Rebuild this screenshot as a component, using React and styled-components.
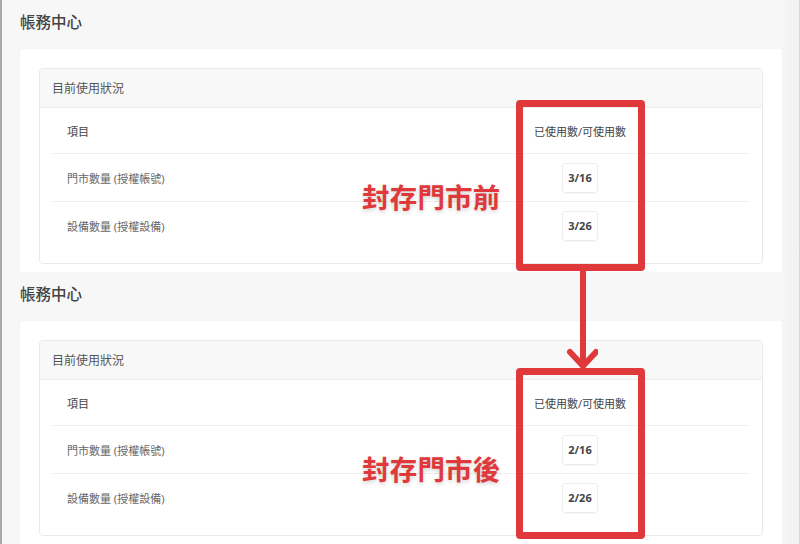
import styled, { createGlobalStyle } from "styled-components";

const GlobalStyle = createGlobalStyle`
  html, body {
    margin: 0;
    padding: 0;
    background: #f7f7f7;
    font-family: "Noto Sans", "Noto Sans CJK TC", sans-serif;
  }
`;

const Page = styled.div`
  position: relative;
  width: 800px;
  height: 544px;
  overflow: hidden;
  box-sizing: border-box;
  border-left: 2px solid #a9a9a9;
  background: #f7f7f7;
`;

const Shot = styled.div`
  display: flex;
  height: ${(p) => p.$height}px;
  overflow: hidden;
`;

const Main = styled.div`
  flex: 1;
  display: flex;
  flex-direction: column;
  gap: 16px;
  padding: 11px 0 0 18px;
`;

const Gutter = styled.div`
  width: 17px;
  flex-shrink: 0;
  background: linear-gradient(to right, #f6f6f6, #f1f1f1);
  border-right: 1px solid #d6d6d6;
`;

const PageTitle = styled.h2`
  margin: 0;
  font-size: 15.5px;
  line-height: 22px;
  font-weight: 500;
  color: #444;
`;

const Card = styled.div`
  background: #fff;
  padding: 19px;
  border-radius: 3px;
  box-shadow: 0 0 3px rgba(0, 0, 0, 0.03);
`;

const Panel = styled.div`
  border: 1px solid #e9e9e9;
  border-radius: 4px;
  overflow: hidden;
`;

const PanelHeader = styled.div`
  display: flex;
  align-items: center;
  height: 38px;
  padding-left: 12px;
  background: #f8f8f8;
  border-bottom: 1px solid #eee;
  font-size: 12px;
  color: #555;
`;

const PanelBody = styled.div`
  padding: 0 12px 14px;
`;

const Row = styled.div`
  display: grid;
  grid-template-columns: 1fr 140px 100px;
  align-items: center;
  height: ${(p) => (p.$head ? 45 : 47)}px;
  border-top: ${(p) => (p.$head ? "none" : "1px solid #f0f0f0")};
  font-size: 11px;
  color: ${(p) => (p.$head ? "#444" : "#666")};
`;

const Label = styled.div`
  padding-left: 15px;
`;

const Count = styled.div`
  display: flex;
  justify-content: center;
  white-space: nowrap;
`;

const Badge = styled.span`
  display: inline-flex;
  align-items: center;
  justify-content: center;
  width: 36px;
  height: 30px;
  box-sizing: border-box;
  border: 1px solid #ececec;
  border-radius: 3px;
  box-shadow: 0 1px 2px rgba(0, 0, 0, 0.04);
  font-size: 11px;
  font-weight: 700;
  color: #444;
`;

const Overlay = styled.div`
  position: absolute;
  inset: 0;
  pointer-events: none;
`;

const RedFrame = styled.div`
  position: absolute;
  left: 514px;
  top: ${(p) => p.$top}px;
  width: 129px;
  height: 171px;
  box-sizing: border-box;
  border: 7px solid #e0393b;
  border-radius: 4px;
`;

const Note = styled.div`
  position: absolute;
  left: 360px;
  top: ${(p) => p.$top}px;
  font-family: "Noto Sans CJK TC", sans-serif;
  font-size: 27.5px;
  line-height: 28px;
  font-weight: 700;
  letter-spacing: 0.2px;
  color: #e0393b;
  text-shadow: 0 2px 4px rgba(0, 0, 0, 0.18);
`;

const Arrow = styled.svg`
  position: absolute;
  left: 564px;
  top: 268px;
`;

const usage = [
  { label: "門市數量 (授權帳號)", key: "store" },
  { label: "設備數量 (授權設備)", key: "device" },
];

const Billing = ({ height, counts }) => (
  <Shot $height={height}>
    <Main>
      <PageTitle>帳務中心</PageTitle>
      <Card>
        <Panel>
          <PanelHeader>目前使用狀況</PanelHeader>
          <PanelBody>
            <Row $head>
              <Label>項目</Label>
              <Count>已使用數/可使用數</Count>
              <div />
            </Row>
            {usage.map((u) => (
              <Row key={u.key}>
                <Label>{u.label}</Label>
                <Count>
                  <Badge>{counts[u.key]}</Badge>
                </Count>
                <div />
              </Row>
            ))}
          </PanelBody>
        </Panel>
      </Card>
    </Main>
    <Gutter />
  </Shot>
);

const App = () => (
  <>
    <GlobalStyle />
    <Page>
      <Billing height={272} counts={{ store: "3/16", device: "3/26" }} />
      <Billing height={272} counts={{ store: "2/16", device: "2/26" }} />
      <Overlay>
        <RedFrame $top={100} />
        <RedFrame $top={368} />
        <Arrow width="32" height="104" viewBox="0 0 32 104">
          <path
            d="M17 0 V98 M4 84 L17 98 L30 84"
            fill="none"
            stroke="#e0393b"
            strokeWidth="6"
            strokeLinecap="round"
            strokeLinejoin="round"
          />
        </Arrow>
        <Note $top={182}>封存門市前</Note>
        <Note $top={454}>封存門市後</Note>
      </Overlay>
    </Page>
  </>
);

export default App;
